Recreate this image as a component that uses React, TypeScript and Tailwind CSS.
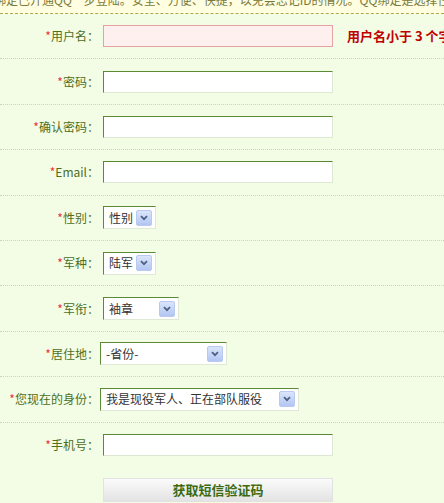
import type { ReactNode } from "react";

const FONT = { fontFamily: '"SimSun", "Noto Sans CJK SC", "Liberation Sans", sans-serif' };

function Arrow() {
  return (
    <span className="flex h-[16px] w-[16px] items-center justify-center rounded-[2px] border border-[#b9c9ef] bg-gradient-to-b from-[#dbe5fb] to-[#b3c6f2]">
      <svg width="8" height="6" viewBox="0 0 8 6">
        <path d="M1 1.2 L4 4.2 L7 1.2" fill="none" stroke="#4d6185" strokeWidth="1.8" />
      </svg>
    </span>
  );
}

function FakeSelect({ value, width }: { value: string; width: string }) {
  return (
    <div
      className={`flex h-[23px] items-center justify-between border-t border-l border-t-[#5b8a34] border-l-[#5b8a34] border-r border-b border-r-[#dfe9d4] border-b-[#dfe9d4] bg-white pl-[5px] pr-[3px] text-[12px] text-[#333] ${width}`}
    >
      <span className="whitespace-nowrap">{value}</span>
      <Arrow />
    </div>
  );
}

function TextBox({ error }: { error?: boolean }) {
  if (error) {
    return <div className="h-[22px] w-[230px] border border-[#e6a2a2] bg-[#fff0f0]" />;
  }
  return (
    <div className="h-[22px] w-[230px] border-t border-l border-t-[#5b8a34] border-l-[#5b8a34] border-r border-b border-r-[#dde8d2] border-b-[#dde8d2] bg-white" />
  );
}

function Row({
  label,
  children,
  last,
  shift,
}: {
  label: string;
  children: ReactNode;
  last?: boolean;
  shift?: boolean;
}) {
  return (
    <div
      className={`flex h-[45.4px] items-center ${last ? "" : "border-b border-dotted border-[#c9d6bd]"}`}
    >
      <div className="w-[99px] shrink-0 whitespace-nowrap text-right text-[12px] text-[#4e6e1c]">
        <span className="text-[#ee3333]">*</span>
        {label}：
      </div>
      <div className={`flex items-center ${shift ? "ml-[1px]" : "ml-[4px]"}`}>{children}</div>
    </div>
  );
}

export default function App() {
  return (
    <div className="h-[503px] w-[444px] overflow-hidden bg-[#f3fde6]" style={FONT}>
      {/* 顶部提示条 */}
      <div className="h-[14px] overflow-hidden border-b border-dashed border-[#a9aa4c] bg-[#fffee0]">
        <div className="-mt-[7px] -ml-[6px] whitespace-nowrap text-[12px] leading-[14px] text-[#7a7a3a]">
          绑定已开通QQ一步登陆。安全、方便、快捷，以免会忘记ID的情况。QQ绑定是选择性的
        </div>
      </div>

      <div className="flex flex-col">
        <Row label="用户名">
          <TextBox error />
          <span className="ml-[14px] whitespace-nowrap text-[13px] font-bold text-[#c00000]">
            用户名小于 3 个字符
          </span>
        </Row>
        <Row label="密码">
          <TextBox />
        </Row>
        <Row label="确认密码">
          <TextBox />
        </Row>
        <Row label="Email">
          <TextBox />
        </Row>
        <Row label="性别">
          <FakeSelect value="性别" width="w-[53px]" />
        </Row>
        <Row label="军种">
          <FakeSelect value="陆军" width="w-[53px]" />
        </Row>
        <Row label="军衔">
          <FakeSelect value="袖章" width="w-[76px]" />
        </Row>
        <Row label="居住地" shift>
          <FakeSelect value="-省份-" width="w-[127px]" />
        </Row>
        <Row label="您现在的身份" shift>
          <FakeSelect value="我是现役军人、正在部队服役" width="w-[199px]" />
        </Row>
        <Row label="手机号" last>
          <TextBox />
        </Row>
        <div className="flex pl-[103px]">
          <button
            type="button"
            className="mt-[10px] h-[24px] w-[230px] border border-[#e2e2e2] bg-gradient-to-b from-[#fbfbfb] to-[#e3e3e3] text-[13px] font-bold text-[#3b6b0e]"
          >
            获取短信验证码
          </button>
        </div>
      </div>
    </div>
  );
}
